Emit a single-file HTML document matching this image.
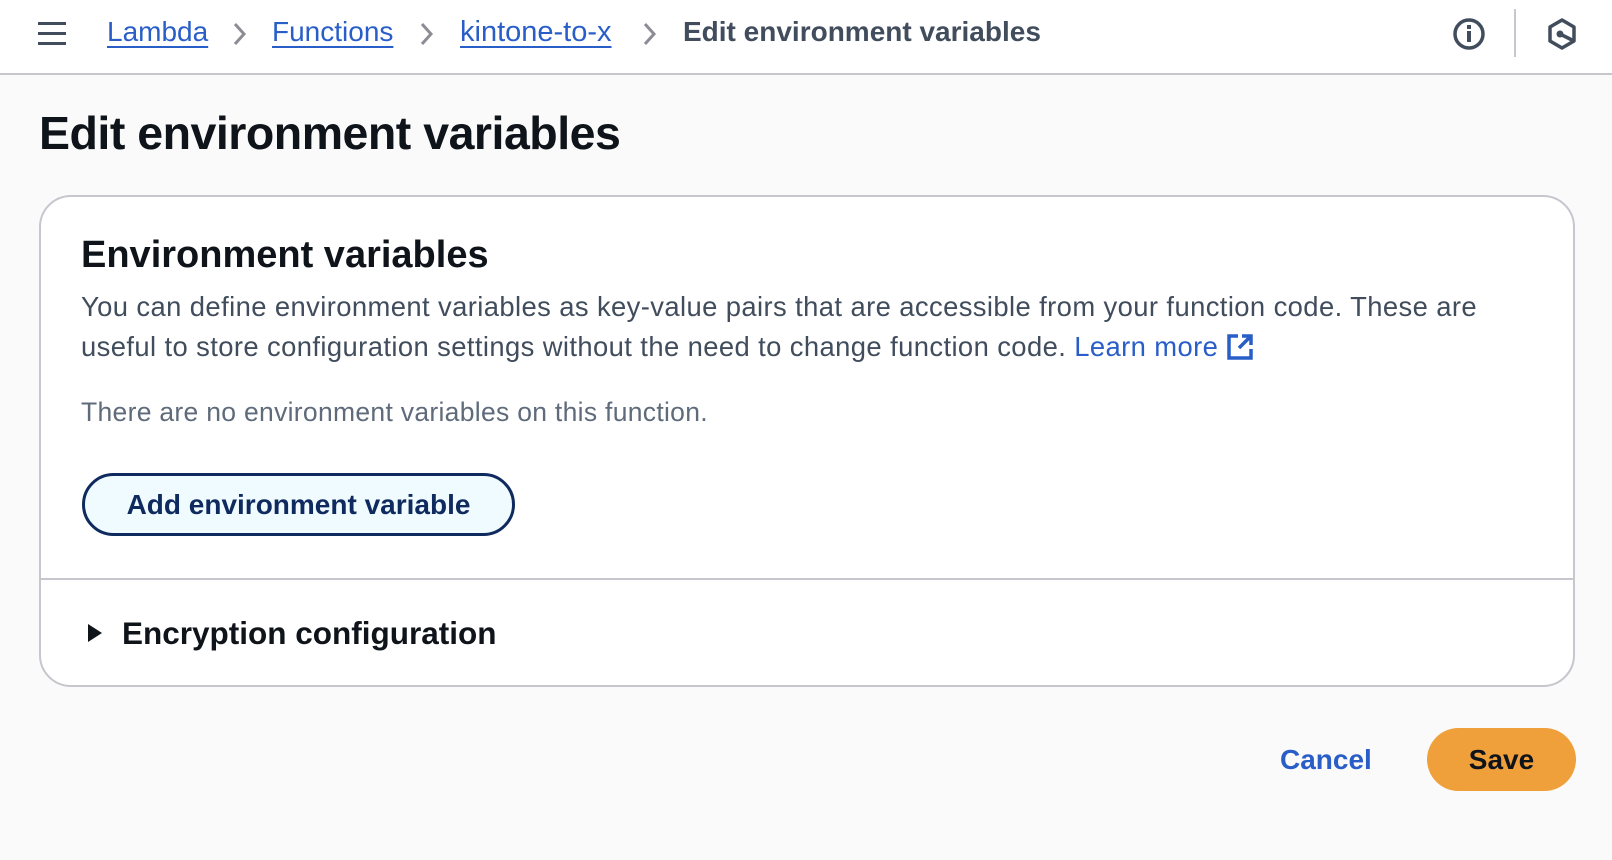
<!DOCTYPE html>
<html><head><meta charset="utf-8"><style>
*{margin:0;padding:0;box-sizing:border-box}
body{width:1612px;height:860px;background:#fafafa;font-family:"Liberation Sans",sans-serif;color:#0f141a;position:relative;overflow:hidden}
.hdr{position:absolute;left:0;top:0;width:1612px;height:75px;background:#fff;border-bottom:2px solid #c6c6cd}
.ab{position:absolute;white-space:nowrap}
.bc{font-size:28px;top:16px;color:#295ec9;text-decoration:underline;text-underline-offset:5px;text-decoration-thickness:2px}
.chev{top:20px}
h1{position:absolute;left:39px;top:106px;font-size:46.5px;font-weight:bold;letter-spacing:-0.5px}
.card{position:absolute;left:39px;top:195px;width:1536px;height:492px;background:#fff;border:2px solid #c6c6cd;border-radius:32px}
</style></head><body>
<div class="hdr">
 <div class="ab" style="left:38px;top:22px;width:28px;height:24px">
  <div style="height:3px;background:#414d5c;margin-bottom:7px"></div><div style="height:3px;background:#414d5c;margin-bottom:7px"></div><div style="height:3px;background:#414d5c"></div></div>
 <span class="ab bc" style="left:107px">Lambda</span>
 <svg class="ab chev" style="left:232px" width="16" height="28" viewBox="0 0 16 28"><path d="M3 4 L12 14 L3 24" stroke="#8c8c94" stroke-width="3" fill="none"/></svg>
 <span class="ab bc" style="left:272px">Functions</span>
 <svg class="ab chev" style="left:419px" width="16" height="28" viewBox="0 0 16 28"><path d="M3 4 L12 14 L3 24" stroke="#8c8c94" stroke-width="3" fill="none"/></svg>
 <span class="ab bc" style="left:460px;font-size:29px">kintone-to-x</span>
 <svg class="ab chev" style="left:642px" width="16" height="28" viewBox="0 0 16 28"><path d="M3 4 L12 14 L3 24" stroke="#8c8c94" stroke-width="3" fill="none"/></svg>
 <span class="ab" style="left:683px;top:16px;font-size:28px;font-weight:bold;color:#414d5c">Edit environment variables</span>
 <svg class="ab" style="left:1452px;top:17px" width="34" height="34" viewBox="0 0 34 34"><circle cx="17" cy="17" r="14" stroke="#414d5c" stroke-width="3.5" fill="none"/><rect x="15" y="14" width="4" height="11" fill="#414d5c"/><rect x="15" y="8" width="4" height="4" fill="#414d5c"/></svg>
 <div class="ab" style="left:1514px;top:9px;width:2px;height:48px;background:#c6c6cd"></div>
 <svg class="ab" style="left:1546px;top:17px" width="32" height="34" viewBox="0 0 32 34"><path d="M16 3 L28 10 L28 24 L16 31 L4 24 L4 10 Z" stroke="#414d5c" stroke-width="3.5" fill="none" stroke-linejoin="round"/><circle cx="14" cy="17" r="3.5" fill="#414d5c"/><path d="M14 17 L22 21 L28 24" stroke="#414d5c" stroke-width="3.5" fill="none"/></svg>
</div>
<h1>Edit environment variables</h1>
<div class="card">
 <div class="ab" style="left:40px;top:37px;font-size:38px;font-weight:bold">Environment variables</div>
 <div class="ab" style="left:40px;top:90px;font-size:27.4px;line-height:40px;letter-spacing:0.4px;color:#414d5c;white-space:normal;width:1460px">You can define environment variables as key-value pairs that are accessible from your function code. These are useful to store configuration settings without the need to change function code. <span style="color:#295ec9">Learn more</span> <svg width="28" height="28" viewBox="0 0 28 28" style="vertical-align:-5px"><path d="M12 3 H3 V25 H25 V16" stroke="#295ec9" stroke-width="3.5" fill="none"/><path d="M16 3 H25 V12 M25 3 L13 15" stroke="#295ec9" stroke-width="3.5" fill="none"/></svg></div>
 <div class="ab" style="left:40px;top:200px;font-size:26.5px;letter-spacing:0.3px;color:#5f6b7a">There are no environment variables on this function.</div>
 <div class="ab" style="left:41px;top:276px;width:433px;height:63px;border:3px solid #0f2a5e;border-radius:32px;background:#f0fbff;color:#0f2a5e;font-size:28px;font-weight:bold;text-align:center;line-height:57px">Add environment variable</div>
 <div class="ab" style="left:0;top:381px;width:1532px;height:2px;background:#c6c6cd"></div>
 <svg class="ab" style="left:45px;top:425px" width="18" height="22" viewBox="0 0 18 22"><path d="M2 2 L16 11 L2 20 Z" fill="#0f141a"/></svg>
 <div class="ab" style="left:81px;top:418px;font-size:31.5px;font-weight:bold">Encryption configuration</div>
</div>
<div class="ab" style="left:1280px;top:744px;font-size:28px;font-weight:bold;color:#295ec9">Cancel</div>
<div class="ab" style="left:1427px;top:728px;width:149px;height:63px;border-radius:32px;background:#f0a03a;font-size:28px;font-weight:bold;text-align:center;line-height:63px">Save</div>
</body></html>
